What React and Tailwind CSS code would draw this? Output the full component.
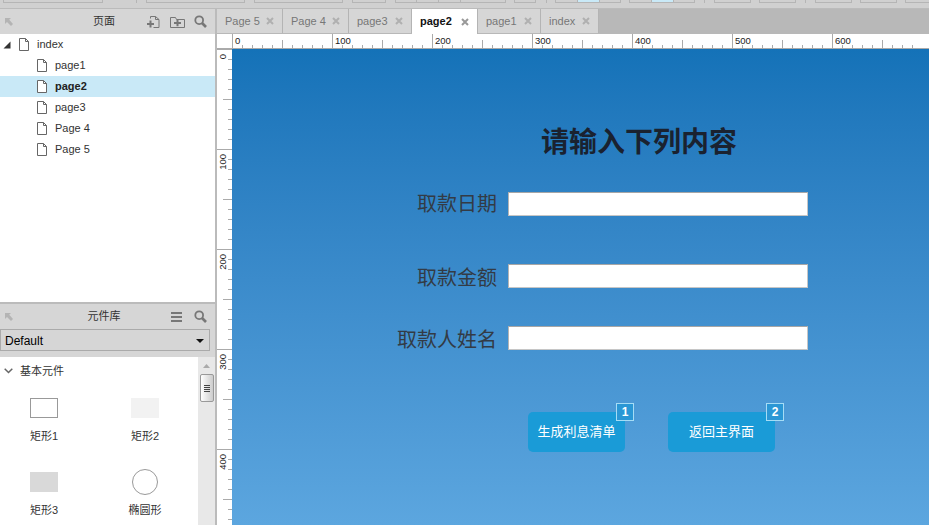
const sans = "font-['Liberation_Sans','Noto_Sans_CJK_SC',sans-serif]";

const pages = [
  { name: 'page1' },
  { name: 'page2', active: true },
  { name: 'page3' },
  { name: 'Page 4' },
  { name: 'Page 5' },
];

const tabs = [
  { name: 'Page 5', w: 'w-[66px]' },
  { name: 'Page 4', w: 'w-[66px]' },
  { name: 'page3', w: 'w-[63px]' },
  { name: 'page2', w: 'w-[66px]', active: true },
  { name: 'page1', w: 'w-[63px]' },
  { name: 'index', w: 'w-[58px]' },
];

function PageIcon({ className = '' }) {
  return (
    <svg width="10" height="13" viewBox="0 0 10 13" fill="none" stroke="#666" className={className}>
      <path d="M.5.5h6l3 3v9h-9z" fill="#fff" />
      <path d="M6.5.5v3h3" />
    </svg>
  );
}

function CornerArrow() {
  return (
    <svg width="10" height="10" viewBox="0 0 10 10" className="ml-[4px]">
      <path d="M1 1h6L5.200 2.800 9 7 7 9 3 4.900 1 7z" fill="#b4b4b4" />
    </svg>
  );
}

function SearchIcon() {
  return (
    <svg width="13" height="13" viewBox="0 0 13 13" fill="none" stroke="#777">
      <circle cx="5.200" cy="5.200" r="3.900" strokeWidth="1.800" />
      <path d="M8 8l4 4" strokeWidth="2.600" />
    </svg>
  );
}

// lower edge of a toolbar button
function ToolBtn({ className = '' }) {
  return <div className={`h-[3px] shrink-0 border-x border-b border-[#b5b5b5] ${className}`} />;
}

function ToolSep({ className = '' }) {
  return <div className={`h-[3px] w-px shrink-0 bg-[#b5b5b5] ${className}`} />;
}

function HRuler() {
  const ticks = [];
  for (let v = 0; v <= 690; v += 10) {
    const y1 = v % 100 === 0 ? 0 : v % 50 === 0 ? 6 : 11;
    ticks.push(<line key={v} x1={v + 0.5} x2={v + 0.5} y1={y1} y2="14" stroke="#aaa" />);
  }
  return (
    <svg width="697" height="14" className="block">
      <g transform="translate(15 0)">
        {ticks}
        {[0, 100, 200, 300, 400, 500, 600].map((v) => (
          <text key={v} x={v + 3} y="9.500" fontSize="9.500" fill="#222" fontFamily="Liberation Sans">{v}</text>
        ))}
      </g>
    </svg>
  );
}

function VRuler() {
  const ticks = [];
  for (let v = 0; v <= 470; v += 10) {
    const x1 = v % 100 === 0 ? 0 : v % 50 === 0 ? 6 : 11;
    ticks.push(<line key={v} x1={x1} x2="15" y1={v + 0.5} y2={v + 0.5} stroke="#aaa" />);
  }
  return (
    <svg width="15" height="476" className="block shrink-0 bg-white">
      {ticks}
      {[0, 100, 200, 300, 400].map((v) => (
        <text key={v} transform={`translate(9 ${v + 5}) rotate(-90)`} textAnchor="end" fontSize="9.500" fill="#222" fontFamily="Liberation Sans">{v}</text>
      ))}
    </svg>
  );
}

function Field({ label, className, labelClass = '' }) {
  return (
    <div className={`flex items-center ${className}`}>
      <div className={`w-[265px] text-right text-[20px] leading-[24px] text-[#333b45] ${labelClass}`}>{label}</div>
      <div className="ml-[11px] h-[24px] w-[300px] border border-[#c6c6c6] border-l-[#b4b4b4] border-t-[#a6a6a6] bg-white" />
    </div>
  );
}

function ActionButton({ label, badge, className, badgeClass }) {
  return (
    <div className={`relative flex h-[40px] items-center justify-center rounded-[5px] bg-[#1a9bd7] text-[13px] text-white ${className}`}>
      {label}
      <span className={`absolute top-[-9px] flex h-[18px] w-[18px] items-center justify-center border border-[#a5dcf5] bg-[#2b97d5] text-[12px] font-bold leading-none ${badgeClass}`}>
        {badge}
      </span>
    </div>
  );
}

function Widget({ label, children, className = '' }) {
  return (
    <div className={`flex flex-col items-center ${className}`}>
      <div className="flex h-[26px] items-center justify-center">{children}</div>
      <div className="mt-[7px] text-[11px] leading-[16px] text-[#333]">{label}</div>
    </div>
  );
}

export default function App() {
  return (
    <div className={`flex h-[525px] w-[929px] flex-col overflow-hidden bg-[#d0d0d0] ${sans}`}>
      {/* toolbar, only its lower edge is in view */}
      <div className="flex h-[9px] shrink-0 items-start overflow-hidden border-b border-[#bbb] bg-[#d0d0d0]">
        <ToolBtn className="ml-[3px] w-[100px]" />
        <ToolSep className="ml-[33px]" />
        <ToolBtn className="ml-[9px] w-[99px]" />
        <ToolBtn className="ml-[9px] w-[89px]" />
        <ToolBtn className="ml-[9px] w-[34px]" />
        <ToolBtn className="ml-[9px] w-[22px]" />
        <ToolBtn className="w-[22px] border-l-0" />
        <ToolBtn className="w-[22px] border-l-0" />
        <ToolBtn className="w-[45px] border-l-0" />
        <ToolBtn className="ml-[8px] w-[22px]" />
        <ToolSep className="ml-[10px]" />
        <ToolBtn className="ml-[8px] w-[23px]" />
        <ToolBtn className="w-[21px] border-x-0 bg-[#c9e9f7]" />
        <ToolBtn className="w-[22px]" />
        <ToolBtn className="ml-[8px] w-[23px]" />
        <ToolBtn className="w-[21px] border-x-0 bg-[#c9e9f7]" />
        <ToolBtn className="w-[22px]" />
        <ToolSep className="ml-[9px]" />
        <ToolBtn className="ml-[9px] w-[37px]" />
        <ToolBtn className="ml-[8px] w-[37px]" />
        <ToolSep className="ml-[9px]" />
        <ToolBtn className="ml-[9px] w-[37px]" />
        <ToolBtn className="ml-[8px] w-[37px]" />
        <ToolBtn className="ml-[8px] w-[37px]" />
      </div>

      <div className="flex min-h-0 flex-1">
        {/* left column */}
        <div className="flex w-[217px] shrink-0 flex-col border-r-2 border-[#bbb] bg-white">
          <div className="flex h-[25px] shrink-0 items-center bg-[#d6d6d6]">
            <CornerArrow />
            <div className="ml-[79px] w-[22px] text-center text-[11px] text-[#333]">页面</div>
            <svg width="13" height="12" viewBox="0 0 13 12" fill="none" stroke="#777" className="ml-[32px]">
              <path d="M3.500 2.500V.5h5l3.500 3v8H6.500" />
              <path d="M8.500.5v3h3.500" />
              <path d="M0 8h7M3.500 4.500v7" strokeWidth="2" />
            </svg>
            <svg width="15" height="12" viewBox="0 0 15 12" fill="none" stroke="#777" className="ml-[10px]">
              <path d="M.5 1.500v10h14v-8h-8l-1-2z" />
              <path d="M4 7h7M7.500 3.800v6.500" strokeWidth="2" />
            </svg>
            <div className="ml-[9px]"><SearchIcon /></div>
          </div>

          <div className="min-h-0 flex-1 bg-white text-[11px] text-[#333]">
            <div className="flex h-[21px] items-center">
              <svg width="10" height="10" viewBox="0 0 10 10" className="ml-[2px]">
                <path d="M8.500 1.500v7h-7z" fill="#333" />
              </svg>
              <PageIcon className="ml-[7px]" />
              <span className="ml-[8px]">index</span>
            </div>
            {pages.map((p) => (
              <div key={p.name} className={`flex h-[21px] items-center pl-[37px] ${p.active ? 'bg-[#c9e9f7] font-bold text-[#222]' : ''}`}>
                <PageIcon />
                <span className="ml-[8px]">{p.name}</span>
              </div>
            ))}
          </div>

          <div className="flex h-[223px] shrink-0 flex-col border-t-2 border-[#bbb]">
            <div className="flex h-[25px] shrink-0 items-center bg-[#d6d6d6]">
              <CornerArrow />
              <div className="ml-[73px] w-[34px] text-center text-[11px] text-[#333]">元件库</div>
              <svg width="12" height="10" viewBox="0 0 12 10" fill="#777" className="ml-[50px]">
                <path d="M0 0h11v2H0zM0 4h11v2H0zM0 8h11v2H0z" />
              </svg>
              <div className="ml-[11px]"><SearchIcon /></div>
            </div>
            <div className="h-[28px] shrink-0 bg-[#d6d6d6]">
              <div className="flex h-[22px] w-[210px] items-center justify-between border border-[#aaa] pl-[4px] pr-[5px] pt-px text-[12px] text-black">
                Default
                <svg width="8" height="4" viewBox="0 0 8 4"><path d="M0 0h8L4 4z" fill="#111" /></svg>
              </div>
            </div>
            <div className="flex min-h-0 flex-1">
              <div className="min-w-0 flex-1 bg-white">
                <div className="flex h-[28px] items-center text-[11px] text-[#333]">
                  <svg width="9" height="6" viewBox="0 0 9 6" fill="none" stroke="#666" strokeWidth="1.500" className="ml-[4px]">
                    <path d="M.7.7l3.800 3.800L8.300.7" />
                  </svg>
                  <span className="ml-[7px]">基本元件</span>
                </div>
                <div className="mt-[10px] grid grid-cols-[88px_114px] justify-items-center">
                  <Widget label="矩形1">
                    <div className="h-[20px] w-[28px] border border-[#999] bg-white" />
                  </Widget>
                  <Widget label="矩形2">
                    <div className="h-[20px] w-[28px] bg-[#f2f2f2]" />
                  </Widget>
                  <Widget label="矩形3" className="mt-[25px]">
                    <div className="h-[20px] w-[28px] bg-[#d9d9d9]" />
                  </Widget>
                  <Widget label="椭圆形" className="mt-[25px]">
                    <div className="h-[26px] w-[26px] rounded-full border border-[#999] bg-white" />
                  </Widget>
                </div>
              </div>
              <div className="flex w-[17px] shrink-0 flex-col items-center bg-[#e8e8e8]">
                <svg width="7" height="4" viewBox="0 0 7 4" className="mt-[7px]"><path d="M3.500 0L7 4H0z" fill="#aaa" /></svg>
                <div className="mt-[6px] flex h-[28px] w-[14px] flex-col items-center justify-center gap-[1px] rounded-[2px] border border-[#999] bg-gradient-to-r from-[#fff] to-[#ccc]">
                  <div className="h-px w-[6px] bg-[#444]" />
                  <div className="h-px w-[6px] bg-[#444]" />
                  <div className="h-px w-[6px] bg-[#444]" />
                  <div className="h-px w-[6px] bg-[#444]" />
                </div>
              </div>
            </div>
          </div>
        </div>

        {/* editor */}
        <div className="flex min-w-0 flex-1 flex-col">
          <div className="flex h-[25px] shrink-0 bg-[#b8b8b8]">
            {tabs.map((t) => (
              <div
                key={t.name}
                className={`flex ${t.w} items-center justify-between border-r border-[#b4b4b4] pl-[8px] pr-[8px] text-[11px] ${t.active ? 'h-[25px] bg-white font-bold text-[#111]' : 'h-[24px] bg-[#d6d6d6] text-[#777]'}`}
              >
                {t.name}
                <svg width="8" height="8" viewBox="0 0 8 8" stroke={t.active ? '#999' : '#b0b0b0'} strokeWidth="2">
                  <path d="M1 1l6 6M7 1L1 7" />
                </svg>
              </div>
            ))}
          </div>
          <div className="h-[15px] shrink-0 border-b border-[#aaa] bg-white">
            <HRuler />
          </div>
          <div className="flex min-h-0 flex-1">
            <VRuler />
            <div className="min-w-0 flex-1 bg-gradient-to-b from-[#1472b8] to-[#5ca6df] pt-[76px]">
              <div className="ml-[309px] text-[28px] font-bold leading-[36px] text-[#1a2230]">请输入下列内容</div>
              <Field label="取款日期" className="mt-[31px]" />
              <Field label="取款金额" className="mt-[48px]" labelClass="translate-y-[2px]" />
              <Field label="取款人姓名" className="mt-[38px]" labelClass="translate-y-[2px]" />
              <div className="ml-[296px] mt-[62px] flex">
                <ActionButton label="生成利息清单" badge="1" className="w-[97px]" badgeClass="left-[88px]" />
                <ActionButton label="返回主界面" badge="2" className="ml-[43px] w-[107px]" badgeClass="left-[98px]" />
              </div>
            </div>
          </div>
        </div>
      </div>
    </div>
  );
}
